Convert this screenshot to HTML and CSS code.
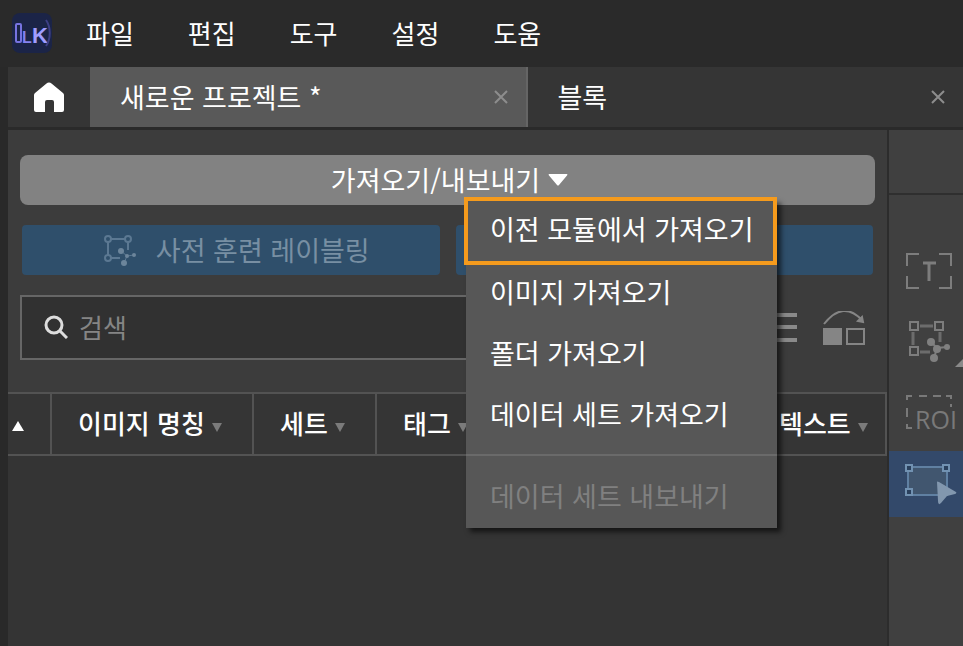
FILE: index.html
```html
<!DOCTYPE html>
<html lang="ko">
<head>
  <meta charset="UTF-8" />
  <meta name="viewport" content="width=device-width, initial-scale=1.0"/>
  <title>새로운 프로젝트</title>
  <link rel="stylesheet" href="styles.css">
</head>
<body>
  <header class="menubar">
    <svg class="logo" width="42" height="42" viewBox="0 0 42 42" aria-hidden="true">
      <rect x="1" y="1" width="40" height="40" rx="8" fill="#1b2447"/>
      <rect x="5" y="12" width="5" height="18" rx="1" fill="none" stroke="#7773e0" stroke-width="2"/>
      <text x="11" y="31" class="logo-l">L</text>
      <text x="21" y="31" class="logo-k">K</text>
      <path d="M35 8c5 7 5 19 0 26" fill="none" stroke="#3d3f86" stroke-width="2"/>
    </svg>
    <nav class="menus">
      <button>파일</button>
      <button>편집</button>
      <button>도구</button>
      <button>설정</button>
      <button>도움</button>
    </nav>
  </header>

  <div class="window">
    <div class="tabs">
      <button class="home" aria-label="홈">
        <svg width="30" height="30" viewBox="0 0 30 30"><path d="M15 0.5q1.500 0 2.500 1L29 11q1 1 1 2V28q0 2-2 2H20V20q0-2-2-2H13q-2 0-2 2V30H2q-2 0-2-2V13q0-1 1-2L12.500 1.500q1-1 2.500-1z" fill="#fff"/></svg>
      </button>
      <div class="tab active">
        <span>새로운 프로젝트 *</span>
        <button class="close" aria-label="닫기">
          <svg width="14" height="14" viewBox="0 0 14 14"><path d="M1 1l12 12M13 1L1 13"/></svg>
        </button>
      </div>
      <div class="tab">
        <span>블록</span>
        <button class="close" aria-label="닫기">
          <svg width="14" height="14" viewBox="0 0 14 14"><path d="M1 1l12 12M13 1L1 13"/></svg>
        </button>
      </div>
    </div>

    <div class="content">
      <main class="panel">
        <div class="controls">
          <div class="dropdown">
            <button class="import-btn">가져오기/내보내기
              <svg width="20" height="12" viewBox="0 0 20 12"><path d="M1 0H19q1 0.500 0 1.500L11 11q-1 1-2 0L1 1.500q-1-1 0-1.500z" fill="#fff"/></svg>
            </button>
            <div class="menu">
              <button class="highlight">이전 모듈에서 가져오기</button>
              <button>이미지 가져오기</button>
              <button>폴더 가져오기</button>
              <button>데이터 세트 가져오기</button>
              <hr>
              <button disabled>데이터 세트 내보내기</button>
            </div>
          </div>

          <div class="actions">
            <button disabled>
              <svg width="32" height="32" viewBox="0 0 32 32" fill="none" stroke="#5b7892" stroke-width="2">
                <circle cx="4" cy="5" r="3"/><circle cx="24" cy="5" r="3"/><circle cx="4" cy="24" r="3"/>
                <path d="M7 5H21M4 8V21M24 8V16M7 24H16"/>
                <path d="M17 17L23 22L20 29M23 22L30 21" stroke-width="1"/>
                <g fill="#6c859b" stroke="none"><circle cx="17" cy="17" r="3"/><circle cx="23" cy="22" r="2"/><circle cx="20" cy="29" r="3"/><circle cx="30" cy="21" r="2"/></g>
              </svg>
              사전 훈련 레이블링
            </button>
            <button disabled aria-label="레이블링"></button>
          </div>

          <div class="search-row">
            <label class="search">
              <svg width="24" height="24" viewBox="0 0 24 24" fill="none" stroke="#ddd"><circle cx="10" cy="10" r="8" stroke-width="3"/><path d="M16 16l7 7" stroke-width="3"/></svg>
              <input type="text" placeholder="검색" aria-label="검색">
            </label>
            <button class="icon-btn" aria-label="목록">
              <svg width="30" height="30" viewBox="0 0 30 30"><path d="M0 2H30M0 14H30M0 27H30" stroke="#8a8a8a" stroke-width="4"/></svg>
            </button>
            <button class="icon-btn" aria-label="전환">
              <svg width="42" height="34" viewBox="0 0 42 34" fill="none" stroke="#858585" stroke-width="2">
                <path d="M1 13Q20-11 39 9"/><path d="M35 10L40 11L39 6z" fill="#858585"/>
                <path d="M0 17H19V34H0z" fill="#858585" stroke="none"/><rect x="24" y="18" width="17" height="15"/>
              </svg>
            </button>
          </div>
        </div>

        <table>
          <colgroup>
            <col class="col-sort"><col class="col-name"><col class="col-set"><col><col class="col-text">
          </colgroup>
          <thead>
            <tr>
              <th class="sort"><svg width="12" height="10" viewBox="0 0 12 10"><path d="M6 0L12 10H0z" fill="#fff"/></svg></th>
              <th>이미지 명칭<i></i></th>
              <th>세트<i></i></th>
              <th>태그<i></i></th>
              <th>텍스트<i></i></th>
            </tr>
          </thead>
        </table>
        <div class="list"></div>
      </main>

      <aside class="toolbar">
        <button aria-label="텍스트 영역">
          <svg width="48" height="36" viewBox="0 0 48 36" fill="none" stroke="#7d7d7d" stroke-width="2">
            <path d="M2 13V1H14M34 1H46V13M46 23V35H34M14 35H2V23"/><path d="M18 10H31M24 10V28" stroke-width="3"/>
          </svg>
        </button>
        <button class="more" aria-label="스마트 레이블링">
          <svg width="48" height="42" viewBox="0 0 48 42" fill="none" stroke="#7d7d7d" stroke-width="2">
            <path d="M5 1h8v8h-8zM30 1h8v8h-8zM5 26h8v8h-8z"/>
            <path d="M15 5H28M8 11V24M35 11V21M15 31H25" stroke="#6c6c6c" stroke-width="3"/>
            <path d="M26 21L32 27L29 37M32 27L42 26"/>
            <g fill="#808080" stroke="none"><circle cx="26" cy="21" r="4"/><circle cx="32" cy="28" r="4"/><circle cx="29" cy="37" r="4"/><circle cx="42" cy="26" r="3"/></g>
          </svg>
        </button>
        <button aria-label="ROI">
          <svg width="60" height="44" viewBox="0 0 60 44" fill="none" stroke="#797979" stroke-width="2">
            <path d="M6 9V5H11M18 5H26M32 5H40M45 5H50V8M50 13V16M6 17V26M6 33V37H11"/>
            <text x="14" y="38" class="roi">ROI</text>
          </svg>
        </button>
        <button class="selected" aria-label="선택">
          <svg width="56" height="42" viewBox="0 0 56 42" fill="none" stroke="#6080a2" stroke-width="2">
            <rect x="7" y="4" width="39" height="28" fill="#41566f"/>
            <path d="M5 2h6v6h-6zM42 2h6v6h-6zM5 26h6v6h-6z" fill="#2a405d" stroke="#7292b2"/>
            <path d="M36 19Q36 18 38 19L55 29Q56 30 54 31L46 33L40 40Q37 43 37 38z" fill="#8297ae" stroke="none"/>
          </svg>
        </button>
      </aside>
    </div>
  </div>
</body>
</html>
```
FILE: styles.css
```css
* {
  box-sizing: border-box;
}
body {
  margin: 0;
  min-height: 100vh;
  display: flex;
  flex-direction: column;
  overflow: hidden;
  background: #292929;
  color: #fff;
  font-family: "Noto Sans CJK KR", sans-serif;
  font-size: 26px;
  line-height: 32px;
}
button {
  padding: 0;
  border: none;
  background: none;
  color: inherit;
  font: inherit;
}
svg {
  display: block;
  flex: none;
}
.menubar {
  display: flex;
  align-items: center;
  height: 67px;
  padding: 0 0 2px 11px;
  background: #2a2a2a;
}
.logo-l,
.logo-k {
  font-family: "Liberation Sans", sans-serif;
  font-weight: bold;
  fill: #8582f0;
}
.logo-l {
  font-size: 16px;
}
.logo-k {
  font-size: 22px;
  fill: #a09dff;
}
.menus {
  display: flex;
  gap: 54px;
  margin-left: 33px;
}
.window {
  flex: 1;
  display: flex;
  flex-direction: column;
  margin-left: 8px;
}
.tabs {
  display: flex;
  height: 63px;
  background: #353535;
  border-bottom: 3px solid #2a2a2a;
  font-size: 27px;
}
.home {
  width: 82px;
  display: grid;
  place-items: center;
}
.tab {
  flex: 1;
  display: flex;
  align-items: center;
  justify-content: space-between;
  padding: 0 18px 0 30px;
}
.tab.active {
  background: #595959;
  border-right: 2px solid #656565;
}
.close svg {
  stroke: #8d8d8d;
  stroke-width: 2;
}
.content {
  flex: 1;
  display: flex;
}
.panel {
  flex: 1;
  display: flex;
  flex-direction: column;
  background: #3c3c3c;
  border-right: 2px solid #2c2c2c;
}
.controls {
  padding: 25px 12px 32px;
}
.dropdown {
  position: relative;
}
.import-btn {
  display: flex;
  align-items: center;
  justify-content: center;
  gap: 8px;
  width: 100%;
  height: 50px;
  padding-left: 4px;
  border-radius: 8px;
  background: #828282;
  font-size: 27px;
}
.menu {
  position: absolute;
  z-index: 1;
  top: 44px;
  right: 98px;
  width: 311px;
  background: #575757;
  box-shadow: 4px 4px 5px rgba(0, 0, 0, 0.6);
  font-size: 27px;
}
.menu button {
  display: block;
  width: 100%;
  height: 61px;
  padding: 0 0 4px 24px;
  text-align: left;
}
.menu .highlight {
  width: calc(100% - 2px);
  height: 64px;
  outline: 4px solid #f59b1d;
  outline-offset: -2px;
}
.menu hr {
  height: 2px;
  margin: 8px 0 11px;
  border: none;
  background: #6a6a6a;
}
.menu button:disabled {
  color: #808080;
}
.actions {
  display: grid;
  grid-template-columns: 1fr 1fr;
  gap: 16px;
  margin: 20px 2px;
}
.actions button {
  display: flex;
  align-items: center;
  justify-content: center;
  gap: 20px;
  height: 50px;
  padding-left: 12px;
  border-radius: 4px;
  background: #2f4f6b;
  color: #788fa3;
  font-size: 27px;
}
.search-row {
  display: flex;
  align-items: center;
  gap: 26px;
  padding-right: 10px;
}
.search {
  flex: 1;
  display: flex;
  align-items: center;
  gap: 11px;
  height: 65px;
  padding: 0 22px 2px;
  background: #313131;
  border: 2px solid #666;
}
.search input {
  flex: 1;
  min-width: 0;
  padding: 0;
  border: none;
  outline: none;
  background: none;
  color: #fff;
  font: inherit;
}
.search input::placeholder {
  color: #858585;
}
table {
  width: 100%;
  table-layout: fixed;
  border-collapse: collapse;
  background: #353535;
}
th {
  height: 62px;
  padding: 0 0 2px 26px;
  border: 2px solid #535353;
  font-size: 26px;
  font-weight: 500;
  text-align: left;
  white-space: nowrap;
}
th:first-child {
  border-left: none;
}
th.sort {
  padding: 4px 0 0 4px;
}
th i {
  display: inline-block;
  margin-left: 7px;
  border: 5px solid transparent;
  border-top: 9px solid #7b7b7b;
  border-bottom: none;
  vertical-align: 2px;
}
.col-sort {
  width: 43px;
}
.col-name {
  width: 202px;
}
.col-set {
  width: 123px;
}
.col-text {
  width: 134px;
}
.list {
  flex: 1;
  background: #343434;
}
.toolbar {
  width: 74px;
  padding-top: 63px;
  background: #404040;
}
.toolbar::before {
  content: "";
  display: block;
  height: 2px;
  margin-bottom: 40px;
  background: #2f2f2f;
}
.toolbar button {
  display: flex;
  align-items: center;
  width: 100%;
  height: 71px;
  padding-left: 16px;
}
.toolbar button:nth-child(n+3) {
  padding-left: 12px;
}
.toolbar .more {
  position: relative;
}
.toolbar .more::after {
  content: "";
  position: absolute;
  right: 0;
  bottom: 10px;
  border-left: 8px solid transparent;
  border-bottom: 8px solid #8a8a8a;
}
.toolbar .selected {
  height: 66px;
  margin-top: 3px;
  background: #33496a;
}
.roi {
  font-family: "Open Sans", sans-serif;
  font-size: 25px;
  fill: #797979;
  stroke: none;
}
```
